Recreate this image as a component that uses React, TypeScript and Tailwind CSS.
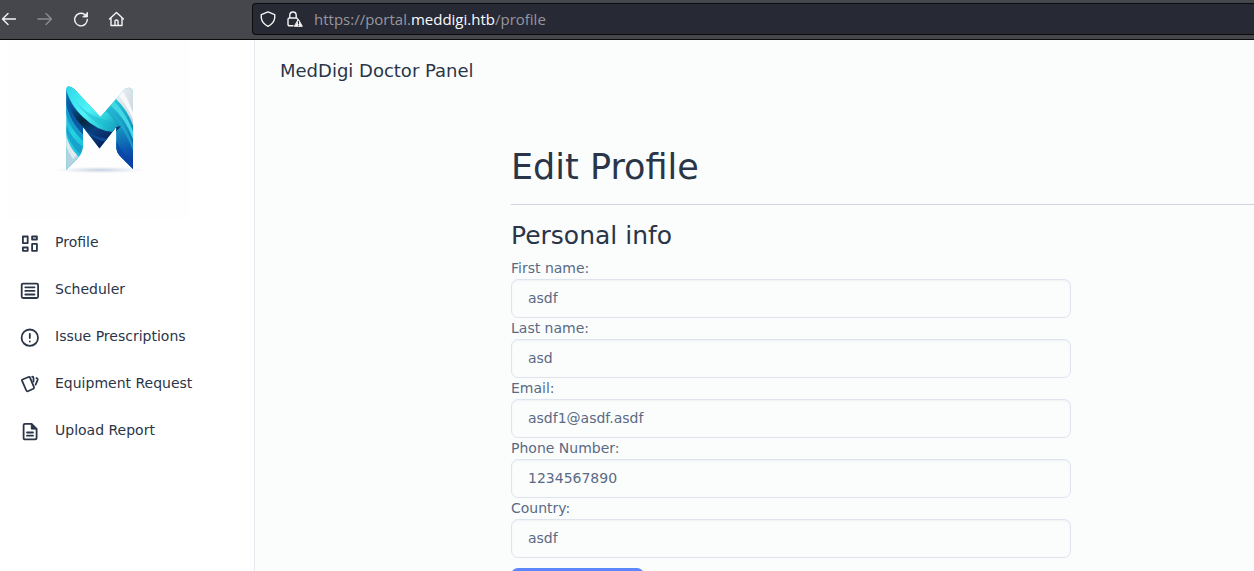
import React from "react";

const INK = "#2a3547";

function NavIcon({ children }: { children: React.ReactNode }) {
  return (
    <svg viewBox="0 0 22 22" className="size-[22px] shrink-0" fill="none" stroke={INK} strokeWidth="1.8" strokeLinejoin="round" strokeLinecap="round" aria-hidden="true">
      {children}
    </svg>
  );
}

const items = [
  {
    label: "Profile",
    icon: (
      <NavIcon>
        <path d="M3.900 3.500h4.800v6.600H3.900zM13.100 3.500h4.800v3h-4.800zM3.900 14.500h4.800v3.300H3.900zM13.100 10.900h4.800v6.900h-4.800z" />
      </NavIcon>
    ),
  },
  {
    label: "Scheduler",
    icon: (
      <NavIcon>
        <rect x="2.700" y="3.600" width="16.400" height="14.400" rx="1.400" />
        <path d="M6.300 7.300h9.200M6.300 10.900h9.200M6.300 14.500h9.200" />
      </NavIcon>
    ),
  },
  {
    label: "Issue Prescriptions",
    icon: (
      <NavIcon>
        <circle cx="10.800" cy="10.700" r="8.200" />
        <path d="M10.800 6.900v4.200M10.800 14.300v.2" />
      </NavIcon>
    ),
  },
  {
    label: "Equipment Request",
    icon: (
      <NavIcon>
        <path d="M3.500 5.500L9.500 3Q10.600 2.600 11 3.600L15 13.200Q15.300 14.300 14.300 14.800L8.900 17.200Q7.800 17.600 7.300 16.500L3 6.700Q2.600 5.800 3.500 5.500Z" />
        <path d="M13.200 2.700Q14.500 2.700 14.500 4V7.500M17.400 4.100L18.200 4.600Q19 5 18.600 6L16.600 10.600" />
      </NavIcon>
    ),
  },
  {
    label: "Upload Report",
    icon: (
      <NavIcon>
        <path d="M6 2.800h6.600l5 5v9Q17.600 18.400 16 18.400H6Q4.600 18.400 4.600 17V4.200Q4.600 2.800 6 2.800Z" />
        <path d="M12.300 3v5.100h5.100Z" fill={INK} strokeWidth="1" />
        <path d="M8 11.500h6M8 14.700h6" />
      </NavIcon>
    ),
  },
];

const fields = [
  { id: "first-name", label: "First name:", value: "asdf", type: "text" },
  { id: "last-name", label: "Last name:", value: "asd", type: "text" },
  { id: "email", label: "Email:", value: "asdf1@asdf.asdf", type: "email" },
  { id: "phone", label: "Phone Number:", value: "1234567890", type: "tel" },
  { id: "country", label: "Country:", value: "asdf", type: "text" },
];

function Logo() {
  return (
    <svg viewBox="0 0 180 180" className="size-[180px] bg-[#fefefe]" role="img" aria-label="MedDigi">
      <defs>
        <linearGradient id="dark" gradientUnits="userSpaceOnUse" x1="58" y1="52" x2="94" y2="106">
          <stop offset="0" stopColor="#0d6fb8" />
          <stop offset=".25" stopColor="#0a4f94" />
          <stop offset=".5" stopColor="#04283f" />
          <stop offset=".72" stopColor="#0a3f80" />
          <stop offset="1" stopColor="#0a1f5c" />
        </linearGradient>
        <linearGradient id="sweep" gradientUnits="userSpaceOnUse" x1="60" y1="48" x2="108" y2="90">
          <stop offset="0" stopColor="#2fdbe8" />
          <stop offset=".45" stopColor="#50f3f8" />
          <stop offset=".75" stopColor="#2bcfdb" />
          <stop offset="1" stopColor="#1596b6" />
        </linearGradient>
        <linearGradient id="right" gradientUnits="userSpaceOnUse" x1="104" y1="62" x2="120" y2="128">
          <stop offset="0" stopColor="#27c3d5" />
          <stop offset=".4" stopColor="#1793c2" />
          <stop offset=".7" stopColor="#0d5db2" />
          <stop offset="1" stopColor="#06309a" />
        </linearGradient>
        <linearGradient id="left" x1="0" y1="0" x2=".5" y2="1">
          <stop offset="0" stopColor="#0f8ec2" />
          <stop offset=".5" stopColor="#24d3e2" />
          <stop offset="1" stopColor="#159fd0" />
        </linearGradient>
        <linearGradient id="pale" x1="0" y1="0" x2="1" y2="1">
          <stop offset="0" stopColor="#f1f4f5" />
          <stop offset="1" stopColor="#c0d0dc" />
        </linearGradient>
        <radialGradient id="shade">
          <stop offset="0" stopColor="#8fa8c8" stopOpacity=".55" />
          <stop offset="1" stopColor="#c9d5e4" stopOpacity="0" />
        </radialGradient>
        <clipPath id="m">
          <path d="M57.300 50Q57.500 46 60 46.600Q64 47 69 53L91.500 77L114 51Q117 47.500 120 47.700Q124 48 124 53V129L111 116Q107.300 112 107.300 107V87L90.500 108.500L74 87V107Q73.500 113 69 118L57.300 130Z" />
        </clipPath>
      </defs>
      <ellipse cx="91" cy="130" rx="48" ry="3.500" fill="url(#shade)" />
      <g clipPath="url(#m)">
        <path d="M57 45h68v86H57z" fill="url(#left)" />
        <path d="M88 80L107 58Q119 70 125 88V131L107 113V86L90 90Z" fill="url(#right)" />
        <path d="M101 65Q117 78 125 102V94Q119 76 105 61Z" fill="#43d9e4" />
        <path d="M96 71Q112 79 125 113V107Q115 80 99 68Z" fill="#20b6d0" opacity=".6" />
        <path d="M107 59L116 46H125V88Q119 70 107 59Z" fill="url(#pale)" />
        <path d="M110 56Q119 67 125 82V75Q120 61 114 51Z" fill="#f6f8f9" />
        <path d="M57 49Q62 70 80 81Q93 92 112 86L91 110L74 88Q60 76 57 55Z" fill="url(#dark)" />
        <path d="M74 86Q82 97 99 99L97 102Q83 99 74 88Z" fill="#0b4a96" />
        <path d="M57 45H64L70 53L91 76L97 71L109 84L104 92Q88 91 74 77Q62 65 57 50Z" fill="url(#sweep)" />
        <path d="M66 61Q81 79 108 82L107 86L103 91Q82 83 66 61Z" fill="#18b2c9" opacity=".45" />
        <path d="M57 55Q60 73 74 87V95Q61 82 57 65Z" fill="#0b5ca6" />
        <path d="M57 65Q61 82 74 95V101Q61 89 57 74Z" fill="#159ccb" />
        <path d="M57 85Q63 99 74 107L71 114Q61 104 57 92Z" fill="#149ac8" opacity=".8" />
        <path d="M57 96Q61 110 70 117L57 131Z" fill="#b5d3df" />
        <path d="M57 96Q61 108 68 115L64 119Q59 112 57 105Z" fill="#dfebf0" />
        <path d="M107 101Q115 117 125 122V131L107 114Z" fill="#0a44a8" opacity=".7" />
      </g>
    </svg>
  );
}

const toolStroke = { fill: "none", stroke: "#f4f4f4", strokeWidth: 1.4, strokeLinecap: "round" as const, strokeLinejoin: "round" as const };

export default function App() {
  return (
    <div className="flex h-screen flex-col overflow-hidden bg-white font-['DejaVu_Sans',sans-serif] text-[#2a3547]">
      <header className="flex h-10 shrink-0 items-center border-b border-[#0c0c0d] bg-[#45474d] pb-px">
        <nav aria-label="Browser" className="flex w-[252px] shrink-0 items-center gap-5">
          <button aria-label="Back"><svg viewBox="0 0 16 16" className="size-4" {...toolStroke}><path d="M2.500 8H15.500M8 2.500L2.500 8 8 13.500" /></svg></button>
          <button aria-label="Forward" disabled className="opacity-40"><svg viewBox="0 0 16 16" className="size-4" {...toolStroke}><path d="M2 8H15.500M10 2.500L15.500 8 10 13.500" /></svg></button>
          <button aria-label="Reload"><svg viewBox="0 0 16 16" className="size-4" {...toolStroke}><path d="M12.500 3.300A6.300 6.300 0 1 0 15.300 8.500" /><path d="M15.500 1.500V6H11Z" fill="#f4f4f4" strokeWidth=".8" /></svg></button>
          <button aria-label="Home"><svg viewBox="0 0 16 16" className="size-4" {...toolStroke}><path d="M1.500 8L8.500 1.500L15.500 8M3 7V14.500H14V7M7 14V10Q7 9 8.500 9T10 10V14" /></svg></button>
        </nav>
        <div className="flex h-8 flex-1 items-center gap-[11px] rounded-l border border-r-0 border-[#0c0c0d] bg-[#272935] pl-[7px]">
          <svg viewBox="0 0 16 16" className="size-4" {...toolStroke} aria-hidden="true"><path d="M8 .9L14.700 3.600V7Q14 12.500 8 15.300Q2 12.500 1.300 7V3.600Z" /></svg>
          <svg viewBox="0 0 16 16" className="size-4" {...toolStroke} aria-hidden="true"><path d="M6 14.800H2.500Q1 14.800 1 13.300V8.500Q1 7 2.500 7H9Q10 7 10.500 8M2.800 7V4.500Q2.800 1 6 1T9.200 4.500V7" /><path d="M11.500 8.500L15.300 15.300H7.700Z" fill="#f4f4f4" strokeWidth="1" /><path d="M11.500 10.500V12.500M11.500 14V14.200" stroke="#272935" strokeWidth="1.200" /></svg>
          <p className="font-['Open_Sans','Noto_Sans',sans-serif] text-[15px] leading-5 text-[#96979d]">https://portal.<span className="text-[#fbfbfe]">meddigi.htb</span>/profile</p>
        </div>
      </header>
      <div className="flex min-h-0 flex-1">
        <aside className="w-[255px] shrink-0 border-r border-[#e5eaef] bg-white">
          <a href="#" className="ml-[9px] block w-fit"><Logo /></a>
          <nav aria-label="Main">
            <ul>
              {items.map((item) => (
                <li key={item.label}>
                  <a href="#" className="flex h-[47px] items-center gap-[14px] pl-[19px] text-sm leading-5">
                    {item.icon}
                    <span className="pb-1">{item.label}</span>
                  </a>
                </li>
              ))}
            </ul>
          </nav>
        </aside>
        <main className="min-w-0 flex-1 bg-[#fbfdfd]">
          <p className="px-[25px] pt-[19px] text-[18px] leading-6">MedDigi Doctor Panel</p>
          <section className="pl-64 pt-[63px]">
            <h1 className="text-[35px] leading-[42px]">Edit Profile</h1>
            <hr className="mt-4 border-[#d1d3df]" />
            <form>
              <h2 className="pb-[7px] pt-4 text-[25px] leading-[30px]">Personal info</h2>
              {fields.map((f) => (
                <div key={f.id} className="flex w-[560px] flex-col text-sm text-[#5a6a85]">
                  <label htmlFor={f.id} className="h-[21px] leading-5">{f.label}</label>
                  <input id={f.id} type={f.type} defaultValue={f.value} className="h-[39px] rounded-[7px] border border-[#dfe3ee] bg-transparent px-4 pb-px shadow-[inset_0_1px_2px_rgba(90,106,133,0.075)]" />
                </div>
              ))}
              <button type="submit" aria-label="Save" className="mt-2.5 block h-10 w-[133px] rounded-[7px] bg-[#5d87ff]" />
            </form>
          </section>
        </main>
      </div>
    </div>
  );
}
